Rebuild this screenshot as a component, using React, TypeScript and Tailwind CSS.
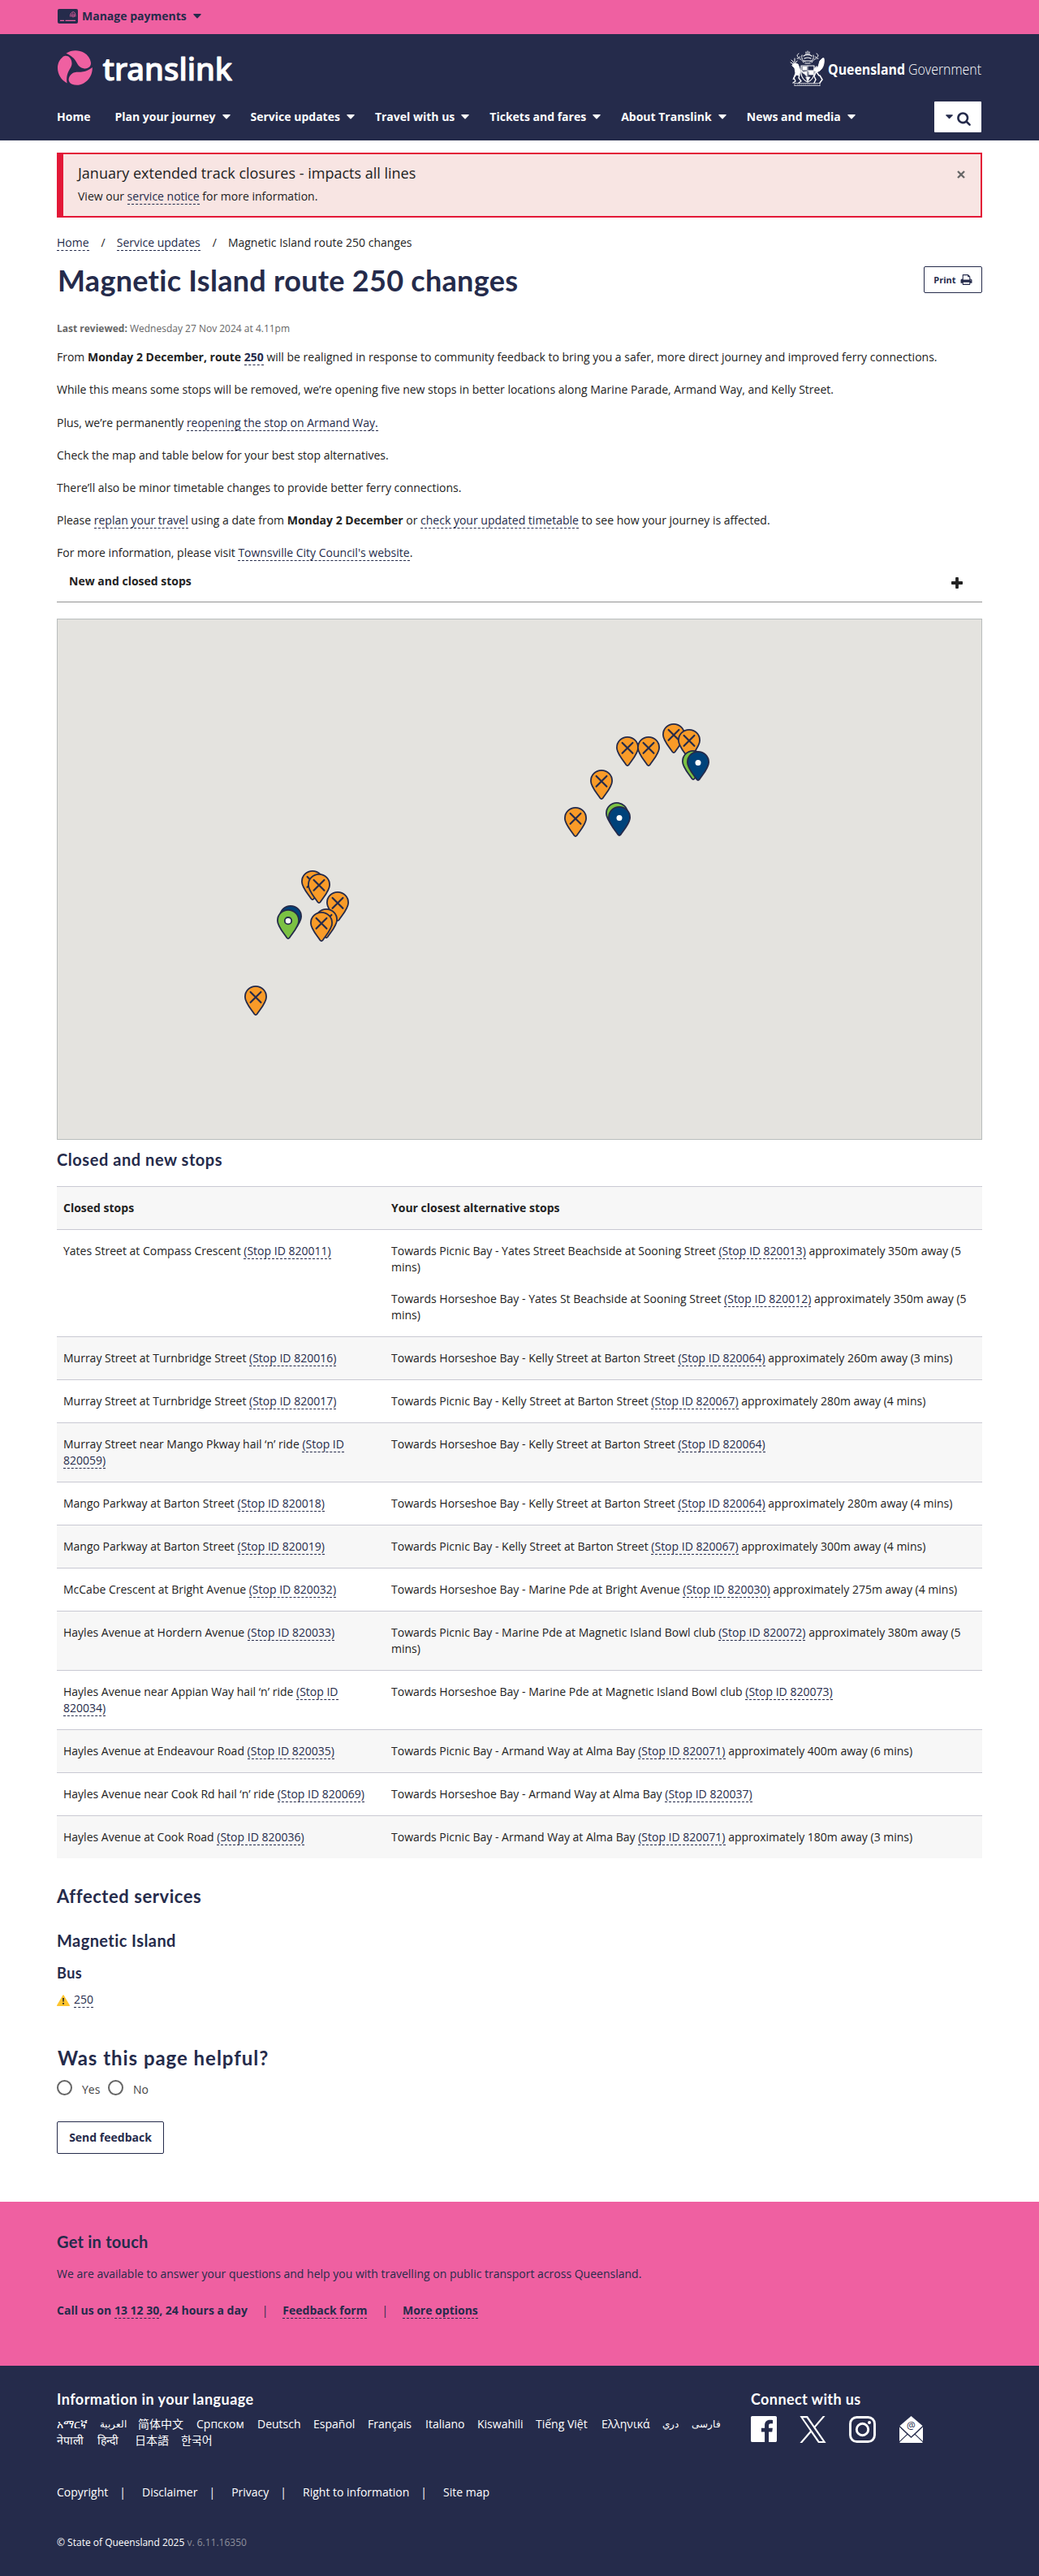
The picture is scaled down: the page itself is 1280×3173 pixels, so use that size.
import React from "react";

function Caret({ className = "" }: { className?: string }) {
  return (
    <svg width="10" height="6" viewBox="0 0 10 6" className={className} fill="currentColor">
      <path d="M0.8 0h8.4q.9.2.4 1L5.6 5.2q-.6.5-1.2 0L.4 1Q-.1.2.8 0z" />
    </svg>
  );
}

function Link({ children }: { children: React.ReactNode }) {
  return (
    <a href="#" className="border-b border-dashed border-[#252b4b] text-[#252b4b]">
      {children}
    </a>
  );
}

function Heading({ children, className }: { children: React.ReactNode; className: string }) {
  return <h2 className={"font-[Lato] font-bold whitespace-nowrap " + className}>{children}</h2>;
}

function TranslinkLogo() {
  const lobe = "M6 8.4C10.5 4.6 17.3 8 17.5 16C17.6 23 9.6 25.5 11.6 40.4C4.5 36.7 0 29.5 0 21.5C0 16 2.4 11.4 6 8.4Z";
  return (
    <svg width="220" height="46" viewBox="0 0 220 46" className="overflow-visible">
      <g fill="#ef60a1">
        <path d={lobe} />
        <path d={lobe} transform="rotate(120 21.6 21.7)" />
        <path d={lobe} transform="rotate(240 21.6 21.7)" />
      </g>
      <text
        x="55.5"
        y="36.5"
        textLength="159.5"
        lengthAdjust="spacingAndGlyphs"
        fontFamily="Noto Sans, sans-serif"
        fontSize="38"
        fontWeight="500"
        fill="#fff"
        stroke="#fff"
        strokeWidth="1.1"
        strokeLinejoin="round"
      >
        translink
      </text>
    </svg>
  );
}

function GovernmentLogo() {
  return (
    <svg width="237" height="44" viewBox="0 0 237 44" className="overflow-visible">
      <g fill="none" stroke="#fff" strokeLinecap="round" strokeLinejoin="round">
        {/* crown and mantling */}
        <path strokeWidth="1" strokeDasharray="2 1" d="M11 3c-4 2-1 6 2 4M33 3c4 2 1 6-2 4M15 5c-1 4 1 7 4 8M29 5c1 4-1 7-4 8M9 9c3-1 6 2 8 5M35 9c-3-1-6 2-8 5M20 1v4M24 1v4M22 0v6" />
        <path strokeWidth="1.2" d="M17 6q5-4 10 0M18 9q4-2 8 0M17 12h10M19 15h6" />
        {/* stag */}
        <path strokeWidth="1" d="M2 11l3 3M6 9v5M1 14l4 2M9 12l-3 4" />
        <path fill="#fff" strokeWidth="1" d="M5 15l5 1 2 5 1 5-2 4-3-1-4 6 3-8-1-6-3-3z" />
        <path strokeWidth="1.4" d="M5 33l2 4-3 2M12 29l-1 4 3 4-3 2M14 24l3 3" />
        {/* brolga */}
        <path fill="#fff" strokeWidth="1" d="M42 9c1 6-1 12-5 15l-4 2-2-3 4-4 2-7 3-3z" />
        <path strokeWidth="1.500" d="M33 19l-3 4 3 3 3 4M32 26l-2 5 2 4-2 4M37 30l3 5-3 4" />
        {/* shield */}
        <path strokeWidth="1.2" d="M14 18h16v10q-1 7-8 10q-7-3-8-10z" />
        <path fill="#fff" strokeWidth="0.6" d="M16 19h5v4h-5zM23 24h6v5h-5zM16 26l5-1v6zM20 32h5l-3 5z" />
        <path strokeWidth="0.7" d="M22 18v20M14 24h16" />
        <path strokeWidth="0.8" strokeOpacity="0.8" d="M6 39.500h31M6 42.500h31M6 39.500v3M37 39.500v3" />
        <path strokeWidth="0.8" strokeOpacity="0.7" strokeDasharray="1 1.400" d="M9 41h26" />
      </g>
      <text x="47" y="28.500" textLength="95" lengthAdjust="spacingAndGlyphs" fontFamily="Open Sans, sans-serif" fontSize="18" fontWeight="700" fill="#fff">
        Queensland
      </text>
      <text x="146" y="28.500" textLength="90" lengthAdjust="spacingAndGlyphs" fontFamily="Open Sans, sans-serif" fontSize="18" fontWeight="350" fill="#fff">
        Government
      </text>
    </svg>
  );
}

type PinKind = "closed" | "new" | "existing";
const pins: [number, number, PinKind][] = [
  [371, 1072, "closed"],
  [378.5, 1076, "closed"],
  [402, 1098, "closed"],
  [388, 1119, "closed"],
  [382, 1122.5, "closed"],
  [344, 1114.5, "existing"],
  [341, 1119.5, "new"],
  [301, 1214, "closed"],
  [695, 994, "closed"],
  [727, 948, "closed"],
  [759, 907, "closed"],
  [785, 907, "closed"],
  [816, 891, "closed"],
  [835, 898, "closed"],
  [840, 924, "new"],
  [846, 924.5, "existing"],
  [746, 988, "new"],
  [749, 992.5, "existing"],
];
const pinFill = { closed: "#f99b28", new: "#7bc143", existing: "#00427a" };

function Pin({ kind }: { kind: PinKind }) {
  return (
    <svg width="28" height="37" viewBox="0 0 28 37" fill="none" stroke="#252b4b" strokeWidth="1.8">
      <path fill={pinFill[kind]} d="M14 .9C6.7.9 .9 6.7 .9 14C.9 21 8 28.5 12.3 35Q14 37 15.7 35C20 28.5 27.1 21 27.1 14C27.1 6.7 21.3.9 14 .9Z" />
      {kind === "closed" && <path strokeWidth="2.2" strokeLinecap="round" d="M7.6 8l12.8 12.8M20.4 8L7.6 20.8" />}
      {kind === "new" && <circle cx="14" cy="14.2" r="4.2" fill="#fff" />}
      {kind === "existing" && <circle cx="14" cy="14.6" r="3.5" fill="#fff" stroke="none" />}
    </svg>
  );
}

type Alt = [string, string, string];
const rows: { from: string; id: string; to: Alt[] }[] = [
  {
    from: "Yates Street at Compass Crescent",
    id: "820011",
    to: [
      ["Towards Picnic Bay - Yates Street Beachside at Sooning Street", "820013", "approximately 350m away (5 mins)"],
      ["Towards Horseshoe Bay - Yates St Beachside at Sooning Street", "820012", "approximately 350m away (5 mins)"],
    ],
  },
  { from: "Murray Street at Turnbridge Street", id: "820016", to: [["Towards Horseshoe Bay - Kelly Street at Barton Street", "820064", "approximately 260m away (3 mins)"]] },
  { from: "Murray Street at Turnbridge Street", id: "820017", to: [["Towards Picnic Bay - Kelly Street at Barton Street", "820067", "approximately 280m away (4 mins)"]] },
  { from: "Murray Street near Mango Pkway hail ‘n’ ride", id: "820059", to: [["Towards Horseshoe Bay - Kelly Street at Barton Street", "820064", ""]] },
  { from: "Mango Parkway at Barton Street", id: "820018", to: [["Towards Horseshoe Bay - Kelly Street at Barton Street", "820064", "approximately 280m away (4 mins)"]] },
  { from: "Mango Parkway at Barton Street", id: "820019", to: [["Towards Picnic Bay - Kelly Street at Barton Street", "820067", "approximately 300m away (4 mins)"]] },
  { from: "McCabe Crescent at Bright Avenue", id: "820032", to: [["Towards Horseshoe Bay - Marine Pde at Bright Avenue", "820030", "approximately 275m away (4 mins)"]] },
  { from: "Hayles Avenue at Hordern Avenue", id: "820033", to: [["Towards Picnic Bay - Marine Pde at Magnetic Island Bowl club", "820072", "approximately 380m away (5 mins)"]] },
  { from: "Hayles Avenue near Appian Way hail ‘n’ ride", id: "820034", to: [["Towards Horseshoe Bay - Marine Pde at Magnetic Island Bowl club", "820073", ""]] },
  { from: "Hayles Avenue at Endeavour Road", id: "820035", to: [["Towards Picnic Bay - Armand Way at Alma Bay", "820071", "approximately 400m away (6 mins)"]] },
  { from: "Hayles Avenue near Cook Rd hail ‘n’ ride", id: "820069", to: [["Towards Horseshoe Bay - Armand Way at Alma Bay", "820037", ""]] },
  { from: "Hayles Avenue at Cook Road", id: "820036", to: [["Towards Picnic Bay - Armand Way at Alma Bay", "820071", "approximately 180m away (3 mins)"]] },
];

const nav = ["Plan your journey", "Service updates", "Travel with us", "Tickets and fares", "About Translink", "News and media"];

const languages: [string, string][] = [
  ["አማርኛ", "w-[53px]"],
  ["العربية", "w-[47px] text-[11.5px]"],
  ["简体中文", "w-[72px]"],
  ["Српском", "w-[75px]"],
  ["Deutsch", "w-[69px]"],
  ["Español", "w-[67px]"],
  ["Français", "w-[71px]"],
  ["Italiano", "w-[64px]"],
  ["Kiswahili", "w-[72px]"],
  ["Tiếng Việt", "w-[81px]"],
  ["Ελληνικά", "w-[75px]"],
  ["دري", "w-[36px] text-[11.5px]"],
  ["فارسی", "w-[38px] text-[11.5px]"],
  ["नेपाली", "w-[50px]"],
  ["हिन्दी", "w-[46px]"],
  ["日本語", "w-[57px]"],
  ["한국어", "w-[48px]"],
];

export default function App() {
  return (
    <div className="flex min-h-[3173px] flex-col bg-white font-['Open_Sans','Noto_Sans_CJK_SC',sans-serif] text-sm leading-5 text-[#222]">
      <div className="h-[42px] bg-[#ef60a1]">
        <div className="mx-auto flex h-[40px] w-[1140px] items-center text-[#252b4b]">
          <svg width="25" height="18" viewBox="0 0 25 18" className="ml-px" fill="none">
            <rect x="0" y="0" width="25" height="18" rx="2" fill="#252b4b" />
            <path stroke="#ef60a1" strokeWidth="1.2" d="M3 14.300h5M9.500 14.300h12.500" />
            <path stroke="#ef60a1" strokeWidth="0.9" d="M15.500 9.500q0-5.500 4-5.800q2.500.3 2.500 5.800M17.300 9.800q0-4 1.700-4.200q1.500.2 1.500 4.200M19 10.500v-3" />
          </svg>
          <span className="ml-[5px] font-bold">Manage payments</span>
          <Caret className="ml-2" />
        </div>
      </div>

      <header className="h-[131px] bg-[#252b4b] text-white">
        <div className="mx-auto w-[1140px]">
          <div className="flex h-[78px] justify-between pt-[20px]">
            <div className="pl-px">
              <TranslinkLogo />
            </div>
            <div className="pt-px">
              <GovernmentLogo />
            </div>
          </div>
          <div className="flex justify-between">
            <nav className="flex gap-x-[25px] pt-[14px] font-bold">
              <a href="#" className="mr-[5px]">Home</a>
              {nav.map((n) => (
                <a href="#" key={n} className="flex h-5 items-center whitespace-nowrap">
                  {n}
                  <Caret className="ml-2" />
                </a>
              ))}
            </nav>
            <button className="mt-[5px] mr-px flex h-[38px] w-[58px] items-center justify-center gap-[5px] rounded-[1px] bg-white text-[#252b4b]">
              <Caret className="w-[9px]" />
              <svg width="17" height="18" viewBox="0 0 1664 1792" fill="currentColor" className="mt-1">
                <path d="M1152 832q0-185-131.500-316.500t-316.500-131.500-316.500 131.500-131.500 316.500 131.500 316.500 316.500 131.500 316.500-131.500 131.500-316.500zM1664 1664q0 52-38 90t-90 38q-54 0-90-38l-343-342q-179 124-399 124-143 0-273.500-55.500t-225-150-150-225-55.500-273.500 55.500-273.500 150-225 225-150 273.500-55.500 273.500 55.500 225 150 150 225 55.500 273.500q0 220-124 399l343 343q37 37 37 90z" />
              </svg>
            </button>
          </div>
        </div>
      </header>

      <main className="mx-auto w-[1140px]">
        <div className="mt-[15px] flex h-20 justify-between border-2 border-l-8 border-[#e31837] bg-[#f8e5e3] pr-[19px] pl-[18px]">
          <div className="pt-[10px]">
            <div className="text-lg leading-[26px]">January extended track closures - impacts all lines</div>
            <div className="mt-[6px]">
              View our <Link>service notice</Link> for more information.
            </div>
          </div>
          <svg width="10" height="10" viewBox="0 0 10 10" className="mt-[20px]" stroke="#666" strokeWidth="2.300">
            <path d="M1 1l8 8M9 1L1 9" />
          </svg>
        </div>

        <div className="mt-[21px] h-5">
          <Link>Home</Link>
          <span className="pr-[14px] pl-[15px]">/</span>
          <Link>Service updates</Link>
          <span className="pr-[14px] pl-[15px]">/</span>
          <span>Magnetic Island route 250 changes</span>
        </div>

        <div className="mt-4 flex h-10 justify-between">
          <h1 className="pl-px font-[Lato] text-4xl leading-10 font-bold tracking-[0.28px] whitespace-nowrap text-[#252b4b]">Magnetic Island route 250 changes</h1>
          <button className="mt-[3px] flex h-[33px] w-[72px] items-center justify-center gap-[5px] rounded-[2px] border border-[#252b4b] text-[11px] font-bold text-[#252b4b]">
            Print
            <svg width="15" height="15" viewBox="0 0 1664 1792" fill="currentColor">
              <path d="M384 1536h896v-256h-896v256zM384 896h896v-384h-160q-40 0-68-28t-28-68v-160h-640v640zM1536 960q0-26-19-45t-45-19-45 19-19 45 19 45 45 19 45-19 19-45zM1664 960v416q0 13-9.500 22.500t-22.500 9.500h-224v160q0 40-28 68t-68 28h-960q-40 0-68-28t-28-68v-160h-224q-13 0-22.500-9.500t-9.500-22.500v-416q0-79 56.500-135.500t135.500-56.500h64v-544q0-40 28-68t68-28h672q40 0 88 20t76 48l152 152q28 28 48 76t20 88v256h64q79 0 135.500 56.500t56.500 135.500z" />
            </svg>
          </button>
        </div>

        <p className="mt-[30px] text-xs leading-5 text-[#666]">
          <b>Last reviewed:</b> Wednesday 27 Nov 2024 at 4.11pm
        </p>

        <div className="mt-[15px] flex flex-col gap-5">
          <p>
            From <b>Monday 2 December, route <Link>250</Link></b> will be realigned in response to community feedback to bring you a safer, more direct journey and improved ferry connections.
          </p>
          <p>While this means some stops will be removed, we’re opening five new stops in better locations along Marine Parade, Armand Way, and Kelly Street.</p>
          <p className="mt-px">
            Plus, we’re permanently <Link>reopening the stop on Armand Way.</Link>
          </p>
          <p>Check the map and table below for your best stop alternatives.</p>
          <p>There’ll also be minor timetable changes to provide better ferry connections.</p>
          <p>
            Please <Link>replan your travel</Link> using a date from <b>Monday 2 December</b> or <Link>check your updated timetable</Link> to see how your journey is affected.
          </p>
          <p>
            For more information, please visit <Link>Townsville City Council's website</Link>.
          </p>
        </div>

        <div className="flex h-[51px] justify-between border-b border-[#949494] pt-[15px] pr-6 pl-[15px]">
          <span className="font-bold">New and closed stops</span>
          <svg width="14" height="18" viewBox="0 0 1408 1792" className="mt-[3px]" fill="#222">
            <path d="M1408 800v192q0 40-28 68t-68 28h-416v416q0 40-28 68t-68 28h-192q-40 0-68-28t-28-68v-416h-416q-40 0-68-28t-28-68v-192q0-40 28-68t68-28h416v-416q0-40 28-68t68-28h192q40 0 68 28t28 68v416h416q40 0 68 28t28 68z" />
          </svg>
        </div>

        <div className="relative mt-5 h-[642px] border border-[#b9bdbd] bg-[#e4e3df]">
          {pins.map(([x, y, kind], i) => (
            <div key={i} className="absolute" style={{ left: x - 71, top: y - 763 }}>
              <Pin kind={kind} />
            </div>
          ))}
        </div>

        <Heading className="mt-3 text-xl leading-6 tracking-[0.55px] text-[#252b4b]">Closed and new stops</Heading>

        <table className="mt-[21px] w-full table-fixed border-collapse text-left">
          <thead>
            <tr className="h-[53px] border-t border-[#c9c9d3] bg-[#f7f7f7]">
              <th className="w-[404px] px-2 py-4 font-bold">Closed stops</th>
              <th className="px-2 py-4 font-bold">Your closest alternative stops</th>
            </tr>
          </thead>
          <tbody>
            {rows.map((r) => (
              <tr key={r.id} className="border-t border-[#c9c9d3] align-top even:bg-[#f7f7f7]">
                <td className="px-2 py-4">
                  {r.from} <Link>(Stop ID {r.id})</Link>
                </td>
                <td className="px-2 py-4">
                  {r.to.map(([text, id, dist], i) => (
                    <p key={id} className={i > 0 ? "mt-[19px]" : ""}>
                      {text} <Link>(Stop ID {id})</Link> {dist}
                    </p>
                  ))}
                </td>
              </tr>
            ))}
          </tbody>
        </table>

        <Heading className="mt-[33px] text-[22px] leading-7 tracking-[0.55px] text-[#252b4b]">Affected services</Heading>
        <Heading className="mt-7 text-xl leading-6 tracking-[0.43px] text-[#252b4b]">Magnetic Island</Heading>
        <Heading className="mt-[17px] text-lg leading-[22px] tracking-[0.5px] text-[#252b4b]">Bus</Heading>
        <div className="mt-3 flex h-5 items-start">
          <svg width="16" height="14" viewBox="0 0 16 14" className="mt-1 mr-[5px]">
            <path d="M8 0.800L15.400 13.300H.6z" fill="#fec52e" stroke="#fec52e" strokeWidth="1.200" strokeLinejoin="round" />
            <path d="M7.100 4h1.800l-.3 4.800h-1.200zM7.100 10h1.800v1.800H7.100z" fill="#222" />
          </svg>
          <span>
            <Link>250</Link>
          </span>
        </div>

        <Heading className="mt-[47px] pl-px text-2xl leading-[30px] tracking-[0.96px] text-[#252b4b]">Was this page helpful?</Heading>
        <div className="mt-3 flex h-[19px] text-[#444]">
          <span className="h-[19px] w-[19px] rounded-full border-2 border-[#666]" />
          <span className="mt-0.5 ml-3 w-8">Yes</span>
          <span className="h-[19px] w-[19px] rounded-full border-2 border-[#666]" />
          <span className="mt-0.5 ml-3">No</span>
        </div>
        <button className="mt-8 h-10 w-[132px] rounded-[2px] border border-[#252b4b] font-bold text-[#252b4b]">Send feedback</button>
      </main>

      <section className="mt-[59px] h-[202px] bg-[#ef60a1] text-[#252b4b]">
        <div className="mx-auto w-[1140px] pt-[37px]">
          <Heading className="text-xl leading-6 tracking-[0.25px]">Get in touch</Heading>
          <p className="mt-[18px]">We are available to answer your questions and help you with travelling on public transport across Queensland.</p>
          <div className="mt-[25px] flex font-bold">
            <span>
              Call us on <Link>13 12 30</Link>, 24 hours a day
            </span>
            <span className="w-[43.500px] text-center font-normal">|</span>
            <span>
              <Link>Feedback form</Link>
            </span>
            <span className="w-[43.500px] text-center font-normal">|</span>
            <span>
              <Link>More options</Link>
            </span>
          </div>
        </div>
      </section>

      <footer className="h-[259px] bg-[#252b4b] text-white">
        <div className="mx-auto w-[1140px] pt-[29px]">
          <div className="flex h-[73px]">
            <div className="w-[855px]">
              <Heading className="text-lg leading-6 tracking-[0.48px]">Information in your language</Heading>
              <div className="mt-[9px] flex w-[830px] flex-wrap">
                {languages.map(([name, size]) => (
                  <a href="#" key={name} className={"h-5 leading-5 whitespace-nowrap " + size}>
                    <bdi>{name}</bdi>
                  </a>
                ))}
              </div>
            </div>
            <div>
              <Heading className="text-lg leading-6 tracking-[0.4px]">Connect with us</Heading>
              <div className="mt-[9px] flex items-start">
                <svg width="32" height="32" viewBox="0 0 24 24" fill="#fff">
                  <path d="M22.676 0H1.324C.593 0 0 .593 0 1.324v21.352C0 23.408.593 24 1.324 24h11.494v-9.294H9.689v-3.621h3.129V8.410c0-3.099 1.894-4.785 4.659-4.785 1.325 0 2.464.097 2.796.141v3.240h-1.921c-1.500 0-1.792.721-1.792 1.771v2.311h3.584l-.465 3.630H16.560V24h6.115c.733 0 1.325-.592 1.325-1.324V1.324C24 .593 23.408 0 22.676 0" />
                </svg>
                <svg width="33" height="33" viewBox="0 0 1200 1227" fill="#fff" className="ml-[28px]">
                  <path d="M714.163 519.284L1160.890 0H1055.030L667.137 450.887L357.328 0H0L468.492 681.821L0 1226.370H105.866L515.491 750.218L842.672 1226.370H1200L714.137 519.284H714.163ZM569.165 687.828L521.697 619.934L144.011 79.694H306.615L611.412 515.685L658.880 583.579L1055.080 1150.300H892.476L569.165 687.854V687.828Z" />
                </svg>
                <svg width="33" height="33" viewBox="0 0 33 33" fill="none" stroke="#fff" strokeWidth="2.900" className="ml-[28px]">
                  <rect x="1.500" y="1.500" width="30" height="30" rx="8" />
                  <circle cx="16.500" cy="16.500" r="7.200" />
                  <circle cx="25" cy="8" r="2" fill="#fff" stroke="none" />
                </svg>
                <svg width="29" height="33" viewBox="0 0 29 33" className="ml-[29px]">
                  <path fill="#fff" d="M14.500 0L28.500 12 14.500 25.300 .5 12z" />
                  <path fill="#fff" d="M0 13.500L9.200 22.300 0 31zM29 13.500L19.800 22.300 29 31zM10 23l4.500 3.900 4.500-3.900L28.500 32v1H.5v-1z" />
                  <text x="14.500" y="16" textAnchor="middle" fontFamily="Open Sans, sans-serif" fontSize="12" fill="#252b4b">
                    @
                  </text>
                </svg>
              </div>
            </div>
          </div>
          <div className="mt-[44px] flex">
            {["Copyright", "Disclaimer", "Privacy", "Right to information", "Site map"].map((t, i) => (
              <React.Fragment key={t}>
                {i > 0 && <span className="mr-[20px] ml-[14px]">|</span>}
                <a href="#">{t}</a>
              </React.Fragment>
            ))}
          </div>
          <div className="mt-[42px] text-xs leading-5">
            © State of Queensland 2025 <span className="text-[#8d8f9b]">v. 6.11.16350</span>
          </div>
        </div>
      </footer>
    </div>
  );
}
